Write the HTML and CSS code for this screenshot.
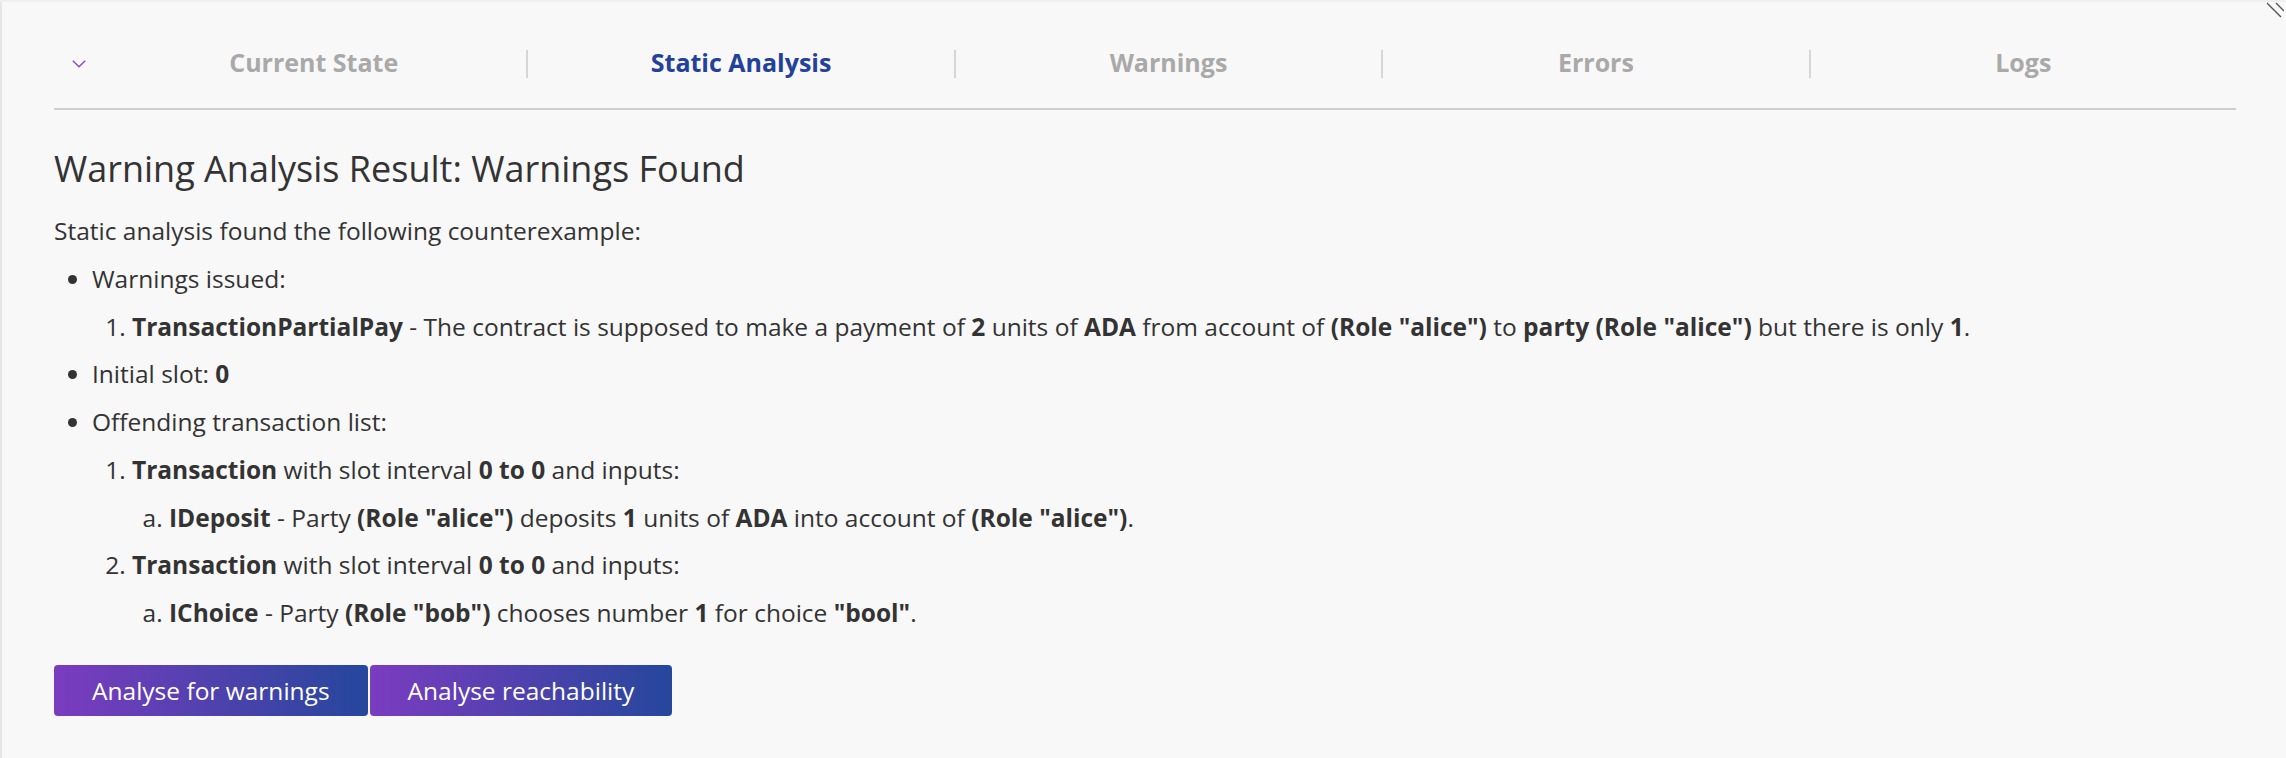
FILE: index.html
```html
<!DOCTYPE html>
<html lang="en">
<head>
<meta charset="utf-8">
<title>Static Analysis</title>
<link rel="stylesheet" href="styles.css">
</head>
<body>
<div class="editor-strip"></div>
<main class="panel">
  <nav class="tabs">
    <button class="collapse" aria-label="Collapse">
      <svg width="14" height="8" viewBox="0 0 14 8"><path d="M0.8 0.8 L7 6.8 L13.2 0.8" fill="none" stroke="#8a48d6" stroke-width="1.5"/></svg>
    </button>
    <div class="tab">Current State</div>
    <div class="tab active">Static Analysis</div>
    <div class="tab">Warnings</div>
    <div class="tab">Errors</div>
    <div class="tab">Logs</div>
  </nav>
  <section class="content">
    <h2 class="title">Warning Analysis Result: Warnings Found</h2>
    <p class="intro">Static analysis found the following counterexample:</p>
    <ul class="result">
      <li>Warnings issued:
        <ol class="num">
          <li><b>TransactionPartialPay</b> - The contract is supposed to make a payment of <b>2</b> units of <b>ADA</b> from account of <b>(Role "alice")</b> to <b>party (Role "alice")</b> but there is only <b>1</b>.</li>
        </ol>
      </li>
      <li>Initial slot: <b>0</b></li>
      <li>Offending transaction list:
        <ol class="num">
          <li><b>Transaction</b> with slot interval <b>0 to 0</b> and inputs:
            <ol class="alpha">
              <li><b>IDeposit</b> - Party <b>(Role "alice")</b> deposits <b>1</b> units of <b>ADA</b> into account of <b>(Role "alice")</b>.</li>
            </ol>
          </li>
          <li><b>Transaction</b> with slot interval <b>0 to 0</b> and inputs:
            <ol class="alpha">
              <li><b>IChoice</b> - Party <b>(Role "bob")</b> chooses number <b>1</b> for choice <b>"bool"</b>.</li>
            </ol>
          </li>
        </ol>
      </li>
    </ul>
    <div class="actions">
      <button class="btn">Analyse for warnings</button>
      <button class="btn">Analyse reachability</button>
    </div>
  </section>
</main>
<svg class="resize-handle" width="17" height="18" viewBox="0 0 17 18"><path d="M0 3 L14 17 M9 3 L17 11" stroke="#555" stroke-width="1.4" fill="none"/></svg>
</body>
</html>
```

FILE: styles.css
```css
html, body {
  margin: 0;
  padding: 0;
  height: 100%;
}
body {
  background: #f8f8f8;
  font-family: "Open Sans", "Liberation Sans", sans-serif;
  color: #333;
  position: relative;
  overflow: hidden;
}
.editor-strip {
  height: 2px;
  background: #efefef;
}
.panel {
  height: calc(100% - 2px);
  box-sizing: border-box;
  border-left: 2px solid #e6e6e6;
  padding: 0 50px 0 52px;
  background: #f8f8f8;
}
.tabs {
  display: flex;
  align-items: center;
  padding: 48px 0 30px;
  border-bottom: 2px solid #cfcfcf;
}
.collapse {
  width: 45px;
  height: 28px;
  flex: none;
  border: 0;
  background: none;
  padding: 0 0 0 18px;
  display: flex;
  align-items: center;
  cursor: pointer;
}
.collapse svg { display: block; }
.tab {
  flex: 1;
  height: 28px;
  box-sizing: border-box;
  padding-bottom: 4px;
  line-height: 24px;
  text-align: center;
  font-size: 25px;
  font-weight: 700;
  color: #a9a9a9;
  border-left: 2px solid #d6d6d6;
}
.tab:nth-child(2) { border-left-color: transparent; }
.tab.active { color: #22419a; }
.content {
  padding-top: 37px;
  font-size: 24.5px;
  line-height: 1.5;
}
.title {
  margin: 0 0 23px;
  font-size: 36px;
  line-height: 43px;
  font-weight: 400;
}
.intro { margin: 0 0 11px; }
.result {
  margin: 0;
  padding-left: 38px;
}
.result li + li { margin-top: 11px; }
.num {
  margin: 11px 0 0;
  padding-left: 40px;
  list-style: decimal;
}
.alpha {
  margin: 11px 0 0;
  padding-left: 37px;
  list-style: lower-alpha;
}
b { font-weight: 700; }
.actions {
  display: flex;
  gap: 2px;
  margin-top: 33px;
}
.btn {
  height: 51px;
  padding: 0 38px;
  border: 0;
  border-radius: 4px;
  background: linear-gradient(to right, #7b3cc0, #25479c);
  color: #fff;
  font-family: "Open Sans", "Liberation Sans", sans-serif;
  font-size: 24.5px;
  cursor: pointer;
}
.resize-handle {
  position: absolute;
  top: 0;
  right: 2px;
}
```
